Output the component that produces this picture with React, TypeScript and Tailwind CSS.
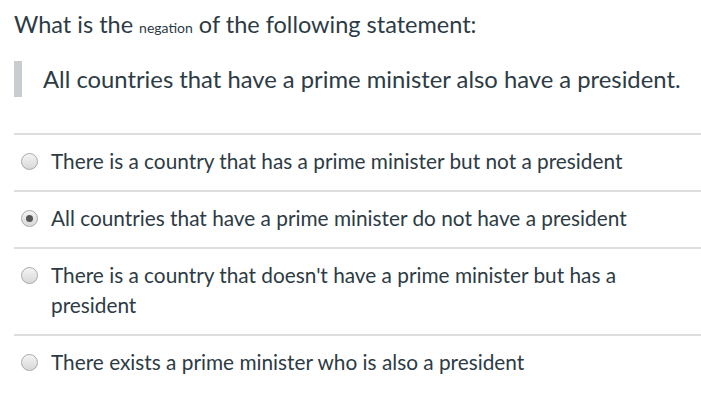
export default function App() {
  const options = [
    { text: "There is a country that has a prime minister but not a president", checked: false },
    { text: "All countries that have a prime minister do not have a president", checked: true },
    { text: "There is a country that doesn't have a prime minister but has a president", checked: false },
    { text: "There exists a prime minister who is also a president", checked: false },
  ];

  return (
    <div className="min-h-[403px] w-[701px] bg-white pl-[14px] font-['Lato','Noto_Sans',sans-serif] text-[#2d3b45]">
      {/* question */}
      <div className="pt-[6px] text-[23.5px] leading-[36px]">
        What is the <span className="text-[14px]">negation</span> of the following statement:
      </div>
      <div className="mt-[15px] border-l-[8px] border-[#c7cdd1] pl-[21px] text-[23.8px] leading-[36px]">
        All countries that have a prime minister also have a president.
      </div>

      {/* answers */}
      <div className="mt-[36px]">
        {options.map((o, i) => (
          <div
            key={i}
            className="flex items-start border-t-2 border-[#dddddd] pb-[14px] pl-[7px] pr-[70px] pt-[11px] text-[20.8px] leading-[30px]"
          >
            <span className="flex h-[30px] shrink-0 items-center">
              <span className="flex h-[17px] w-[17px] items-center justify-center rounded-full border border-[#a9a9a9] bg-gradient-to-b from-[#f4f4f4] to-[#d8d8d8]">
                {o.checked && <span className="h-[7px] w-[7px] rounded-full bg-[#555555]" />}
              </span>
            </span>
            <span className="ml-[13px]">{o.text}</span>
          </div>
        ))}
      </div>
    </div>
  );
}
